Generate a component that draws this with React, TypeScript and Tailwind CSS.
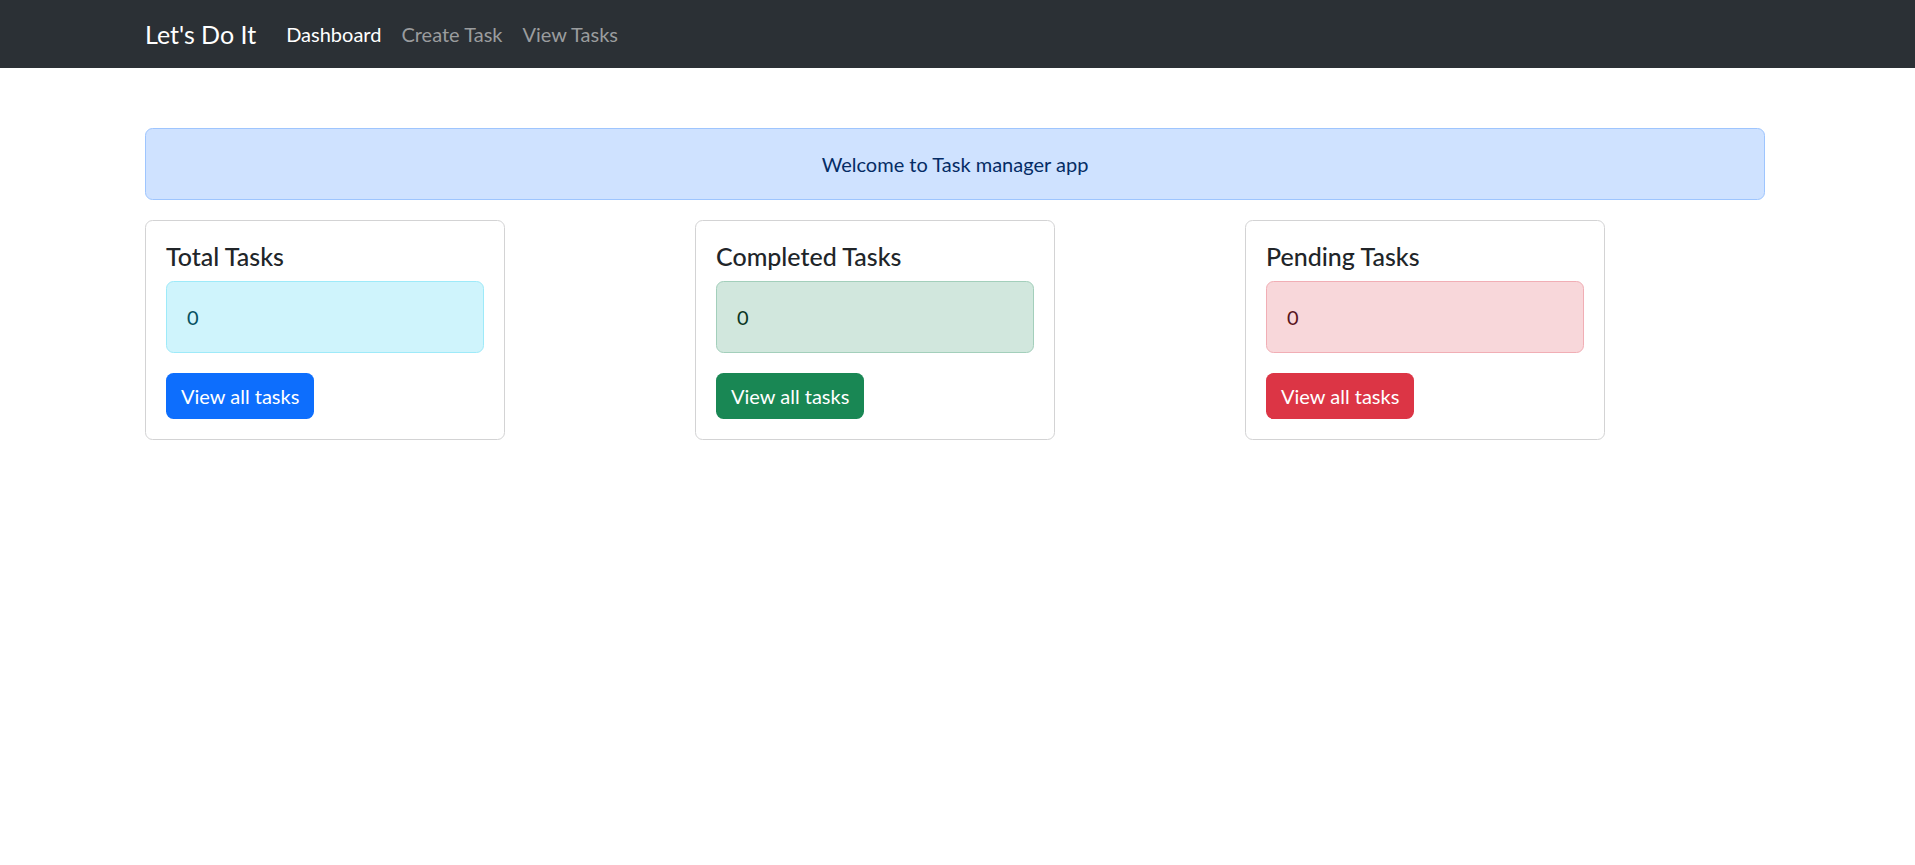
import React from 'react';

const font = { fontFamily: 'Lato, "Open Sans", "Liberation Sans", sans-serif' };

const stats = [
  {
    title: 'Total Tasks',
    count: 0,
    box: 'bg-[#cff4fc] border-[#9eeaf9] text-[#055160]',
    btn: 'bg-[#0d6efd]',
  },
  {
    title: 'Completed Tasks',
    count: 0,
    box: 'bg-[#d1e7dd] border-[#a3cfbb] text-[#0a3622]',
    btn: 'bg-[#198754]',
  },
  {
    title: 'Pending Tasks',
    count: 0,
    box: 'bg-[#f8d7da] border-[#f1aeb5] text-[#58151c]',
    btn: 'bg-[#dc3545]',
  },
];

export default function App() {
  return (
    <div className="min-h-screen bg-white text-[#212529]" style={font}>
      {/* Navbar */}
      <nav className="h-[68px] bg-[#2b3035]">
        <div className="w-[1620px] ml-[145px] h-full flex items-center">
          <a className="text-[25px] leading-[37px] text-white mr-[20px]">Let's Do It</a>
          <div className="flex items-center text-[20px] leading-[30px]">
            <a className="px-[10px] text-white">Dashboard</a>
            <a className="px-[10px] text-[#9a9c9e]">Create Task</a>
            <a className="px-[10px] text-[#9a9c9e]">View Tasks</a>
          </div>
        </div>
      </nav>

      <main className="w-[1620px] ml-[145px] pt-[60px]">
        {/* Welcome alert */}
        <div className="mb-[20px] rounded-[7.5px] border border-[#9ec5fe] bg-[#cfe2ff] py-[20px] text-center text-[20px] leading-[30px] text-[#052c65]">
          Welcome to Task manager app
        </div>

        {/* Stat cards */}
        <div className="grid grid-cols-3 gap-[30px]">
          {stats.map((s) => (
            <div key={s.title}>
              <div className="w-[360px] rounded-[7.5px] border border-[#d3d3d4] p-[20px]">
                <h5 className="mb-[10px] text-[25px] leading-[30px] font-medium">{s.title}</h5>
                <div className={`mb-[20px] rounded-[7.5px] border px-[20px] py-[20px] text-[20px] leading-[30px] ${s.box}`}>
                  {s.count}
                </div>
                <button className={`rounded-[7.5px] px-[15px] py-[8px] text-[20px] leading-[30px] text-white ${s.btn}`}>
                  View all tasks
                </button>
              </div>
            </div>
          ))}
        </div>
      </main>
    </div>
  );
}
